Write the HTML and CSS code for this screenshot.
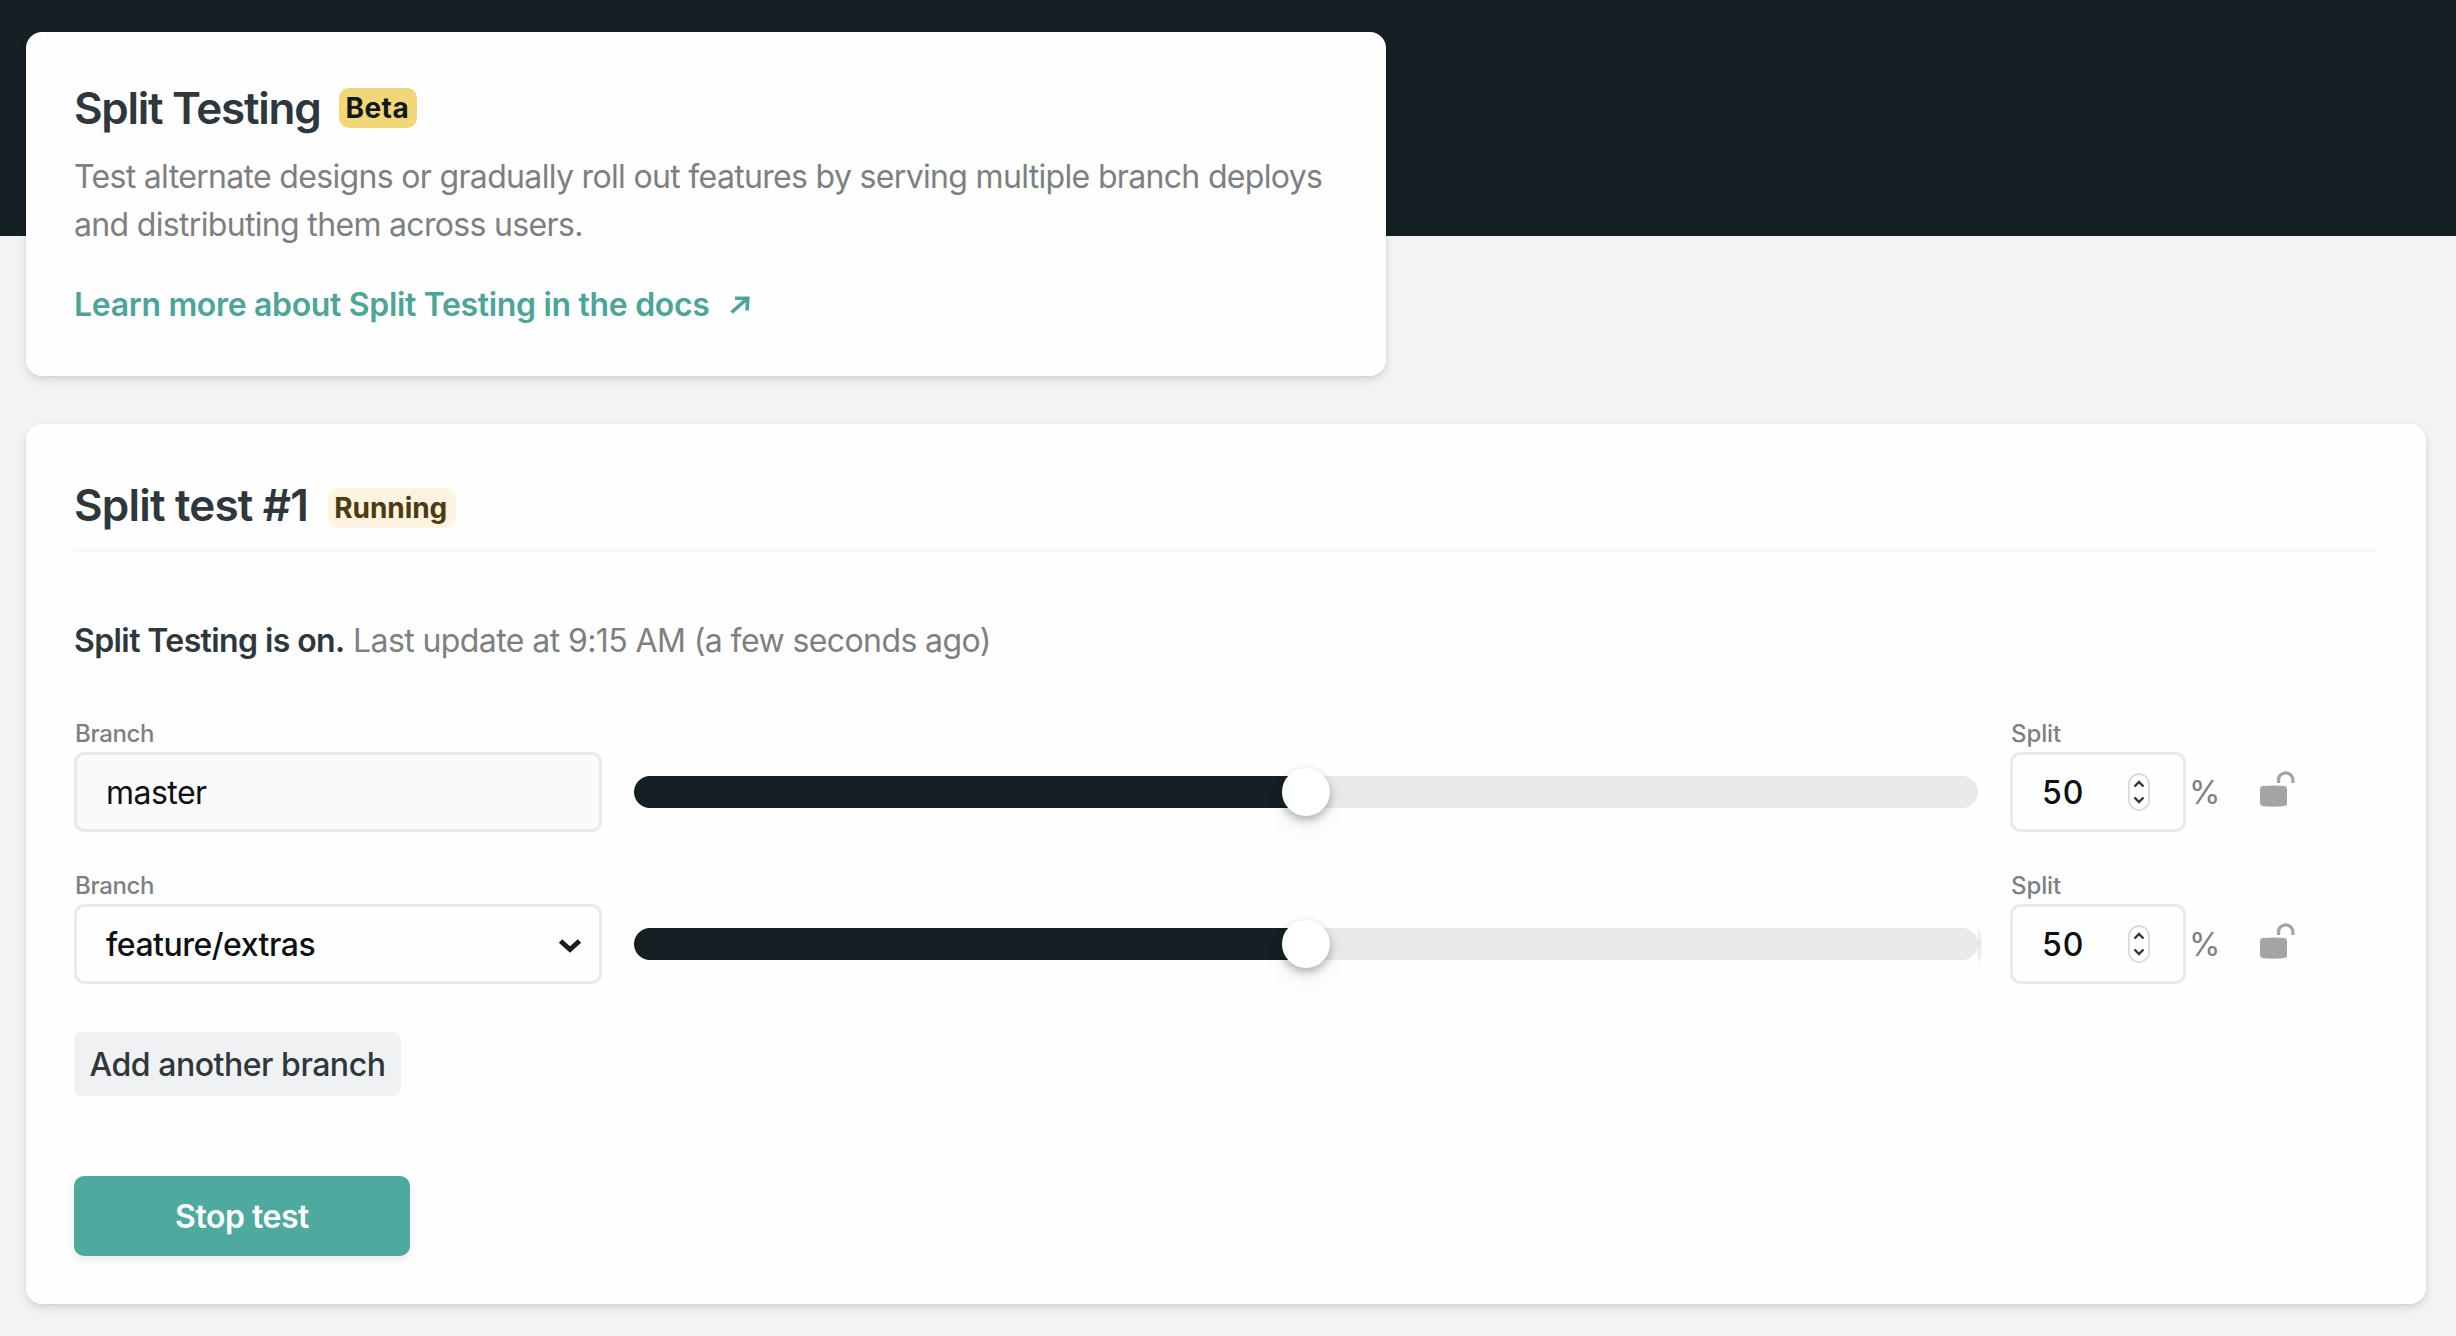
FILE: index.html
```html
<!DOCTYPE html>
<html lang="en">
<head>
<meta charset="utf-8">
<title>Split Testing</title>
<link rel="stylesheet" href="styles.css">
</head>
<body>
<main class="page">
  <section class="card intro">
    <header class="intro-head">
      <h1 class="title">Split Testing</h1>
      <span class="badge badge-beta">Beta</span>
    </header>
    <p class="lead">Test alternate designs or gradually roll out features by serving multiple branch deploys<br>and distributing them across users.</p>
    <a class="docs-link" href="#"><span>Learn more about Split Testing in the docs</span>
      <svg class="arrow" viewBox="0 0 20 18"><path d="M1.500 16.500 16.500 3.200M5 2.200l12.800 0-.8 12.300" fill="none" stroke="currentColor" stroke-width="3.600"/></svg>
    </a>
  </section>

  <section class="card test">
    <header class="test-head">
      <h2 class="title title-test">Split test #1</h2>
      <span class="badge badge-running">Running</span>
    </header>
    <p class="status"><strong>Split Testing is on.</strong> <span class="updated">Last update at 9:15 AM (a few seconds ago)</span></p>

    <div class="rows">
      <div class="row">
        <div class="field branch">
          <span class="label">Branch</span>
          <div class="box readonly">master</div>
        </div>
        <div class="slider"><div class="track"><div class="fill" style="width:50%"></div><div class="knob" style="left:50%"></div></div></div>
        <div class="field split">
          <span class="label label-split">Split</span>
          <div class="box number"><span>50</span>
            <svg class="stepper" viewBox="0 0 22 38"><rect x="1" y="1" width="20" height="36" rx="10" fill="#fff" stroke="#d4d4d4" stroke-width="1.500"/><path d="M6.500 13.500 11 9l4.500 4.500M6.500 24.500 11 29l4.500-4.500" fill="none" stroke="#333" stroke-width="2.400"/></svg>
          </div>
        </div>
        <span class="percent">%</span>
        <svg class="lock" viewBox="0 0 36 40"><path d="M3.500 18Q14.500 16.800 25.500 18 28 18.200 28 20.500V35.500Q28 37.800 25.500 38 14.500 39.500 3.500 38 1 37.800 1 35.500V20.500Q1 18.200 3.500 18Z"/><path d="M19.500 15V12a7.200 7.200 0 0 1 14.400 0V15" fill="none" stroke="#a2a5a6" stroke-width="3.200"/></svg>
      </div>

      <div class="row">
        <div class="field branch">
          <span class="label">Branch</span>
          <div class="box select"><span>feature/extras</span>
            <svg class="chevron" viewBox="0 0 24 15"><path d="M2.500 3 12 11.500 21.500 3" fill="none" stroke="currentColor" stroke-width="5"/></svg>
          </div>
        </div>
        <div class="slider slider-last"><div class="track"><div class="fill" style="width:50%"></div><div class="knob" style="left:50%"></div></div></div>
        <div class="field split">
          <span class="label label-split">Split</span>
          <div class="box number"><span>50</span>
            <svg class="stepper" viewBox="0 0 22 38"><rect x="1" y="1" width="20" height="36" rx="10" fill="#fff" stroke="#d4d4d4" stroke-width="1.500"/><path d="M6.500 13.500 11 9l4.500 4.500M6.500 24.500 11 29l4.500-4.500" fill="none" stroke="#333" stroke-width="2.400"/></svg>
          </div>
        </div>
        <span class="percent">%</span>
        <svg class="lock" viewBox="0 0 36 40"><path d="M3.500 18Q14.500 16.800 25.500 18 28 18.200 28 20.500V35.500Q28 37.800 25.500 38 14.500 39.500 3.500 38 1 37.800 1 35.500V20.500Q1 18.200 3.500 18Z"/><path d="M19.500 15V12a7.200 7.200 0 0 1 14.400 0V15" fill="none" stroke="#a2a5a6" stroke-width="3.200"/></svg>
      </div>
    </div>

    <button class="add" type="button">Add another branch</button>
    <button class="stop" type="button">Stop test</button>
  </section>
</main>
</body>
</html>
```
FILE: styles.css
```css
* { box-sizing: border-box; }

body {
  margin: 0;
  min-height: 1336px;
  background: linear-gradient(#142024 236px, #f3f3f3 236px);
  font: 400 32px/48px Inter, "Liberation Sans", sans-serif;
  letter-spacing: -0.6px;
  color: #2d373c;
}

h1, h2, p { margin: 0; }

.page {
  display: flex;
  flex-direction: column;
  align-items: flex-start;
  gap: 48px;
  padding: 32px 30px 32px 26px;
}

.card {
  padding: 48px;
  border-radius: 16px;
  background: #fefefe;
  box-shadow: 0 4px 8px rgba(14, 30, 37, 0.13), 0 1px 3px rgba(14, 30, 37, 0.04);
}

.intro { width: 1360px; height: 344px; }
.test { width: 100%; height: 880px; display: flex; flex-direction: column; align-items: flex-start; }

.intro-head, .test-head { display: flex; align-items: center; }
.intro-head { gap: 19px; height: 56px; }
.test-head {
  gap: 20px;
  width: 100%;
  height: 80px;
  padding-bottom: 5px;
  border-bottom: 3px solid #f7f7f7;
}

.title { font-size: 44px; line-height: 56px; font-weight: 600; letter-spacing: -1.28px; }
.title-test { letter-spacing: -0.8px; line-height: 64px; padding-bottom: 7px; }

.badge {
  height: 40px;
  padding: 0 6px;
  border-radius: 10px;
  font-size: 28px;
  line-height: 40px;
  font-weight: 700;
}
.badge-beta { width: 78px; background: #f2d779; color: #12191d; letter-spacing: 0.5px; }
.badge-running { width: 128px; background: #fcf4e0; color: #4d3b12; letter-spacing: -0.05px; }

.lead { margin-top: 17px; color: #7d8082; letter-spacing: -0.67px; white-space: nowrap; }

.docs-link {
  display: flex;
  align-items: center;
  gap: 20px;
  margin-top: 32px;
  color: #4ba598;
  font-weight: 600;
  letter-spacing: -0.33px;
  text-decoration: none;
}
.arrow { width: 20px; height: 18px; }

.status { margin-top: 65px; white-space: nowrap; }
.status strong { font-weight: 600; }
.updated { color: #7d8082; letter-spacing: -0.59px; }

.rows { display: flex; flex-direction: column; gap: 36px; width: 100%; margin-top: 51px; }
.row { display: flex; align-items: flex-end; height: 116px; }

.field { display: flex; flex-direction: column; }
.branch { width: 528px; }
.split { width: 176px; }
.label { height: 36px; padding-left: 1px; font-size: 24px; line-height: 36px; font-weight: 500; color: #7d8082; letter-spacing: -0.37px; }
.label-split { letter-spacing: -0.1px; }

.box {
  display: flex;
  align-items: center;
  justify-content: space-between;
  height: 80px;
  padding: 2px 14px 0 29px;
  border: 3px solid #e9e9e9;
  border-radius: 10px;
  background: #fefefe;
  color: #0e1113;
}
.readonly { background: #fafafa; letter-spacing: -0.54px; }
.select { padding-right: 17px; font-weight: 500; letter-spacing: -0.5px; }
.number { padding-right: 33px; font-weight: 500; letter-spacing: 1px; }
.chevron { width: 24px; height: 15px; color: #141e23; }
.stepper { width: 22px; height: 38px; margin-top: -3px; }

.slider { display: flex; align-items: center; width: 1344px; height: 80px; margin: 0 32px; position: relative; }
.track { position: relative; width: 100%; height: 32px; border-radius: 16px; background: #e9e9e9; }
.fill { height: 32px; border-radius: 16px 0 0 16px; background: #142024; }
.knob {
  position: absolute;
  top: -8px;
  width: 48px;
  height: 48px;
  margin-left: -24px;
  border-radius: 50%;
  background: #fff;
  box-shadow: 0 4px 8px rgba(14, 30, 37, 0.32), 0 12px 24px rgba(14, 30, 37, 0.05);
}
/* soft shade past the end of the last track */
.slider-last::after {
  content: "";
  position: absolute;
  left: 1344px;
  top: 20px;
  width: 5px;
  height: 44px;
  background: radial-gradient(ellipse at left, rgba(0, 0, 0, 0.13), transparent 70%);
}

.percent { width: 32px; margin-left: 3px; line-height: 78px; color: #7d8082; }
.lock { width: 36px; height: 40px; margin: 0 0 24px 38px; fill: #a2a5a6; }

button { border: 0; font: inherit; display: block; }
.add {
  width: 327px;
  height: 64px;
  margin-top: 48px;
  padding: 2px 0 0;
  border-radius: 8px;
  background: #f0f1f2;
  color: #2d373c;
  font-weight: 500;
  letter-spacing: -0.47px;
}
.stop {
  width: 336px;
  height: 80px;
  margin-top: 80px;
  padding: 2px 0 0;
  border-radius: 10px;
  background: #4eaa9e;
  color: #fff;
  font-weight: 600;
  letter-spacing: -0.47px;
  box-shadow: 0 4px 8px rgba(14, 30, 37, 0.09);
}
```
